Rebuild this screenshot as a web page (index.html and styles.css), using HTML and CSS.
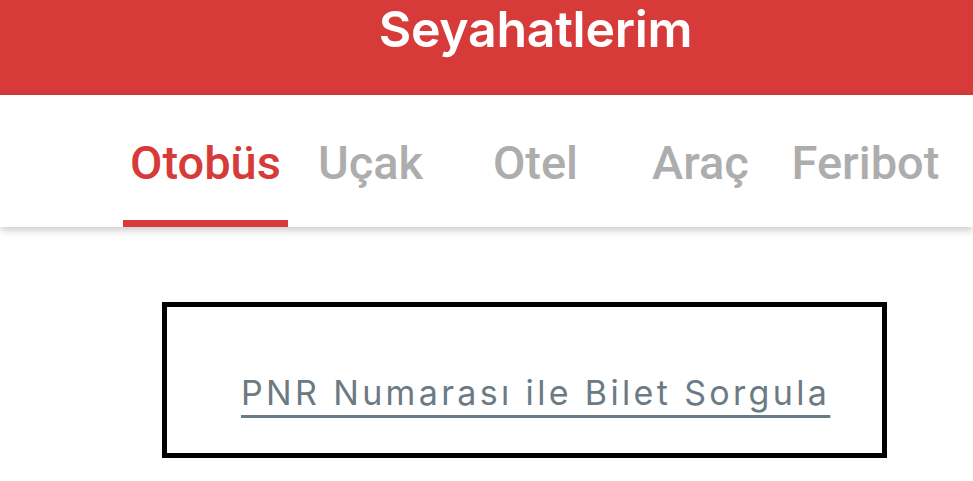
FILE: index.html
```html
<!DOCTYPE html>
<html lang="tr">
<head>
    <meta charset="UTF-8">
    <meta name="viewport" content="width=device-width, initial-scale=1.0">
    <title>Seyahatlerim</title>
    <link rel="stylesheet" href="styles.css">
</head>
<body>
    <header class="topbar">
        <h1 class="page-title">Seyahatlerim</h1>
    </header>

    <!-- Trip type tabs -->
    <nav class="tabs">
        <div class="tab-row">
            <a class="tab active" href="#">Otobüs</a>
            <a class="tab" href="#">Uçak</a>
            <a class="tab" href="#">Otel</a>
            <a class="tab" href="#">Araç</a>
            <a class="tab" href="#">Feribot</a>
        </div>
    </nav>

    <main class="content">
        <div class="pnr-box">
            <a class="pnr-link" href="#">PNR Numarası ile Bilet Sorgula</a>
        </div>
    </main>
</body>
</html>
```

FILE: styles.css
```css
body {
    margin: 0;
    padding: 0;
    font-family: Inter, "Noto Sans", sans-serif;
    background-color: #ffffff;
}
.topbar {
    background-color: #d63b3a;
    height: 95px;
    padding: 0 25px 0 123px;
    box-sizing: border-box;
}
.page-title {
    margin: 0;
    text-align: center;
    color: #ffffff;
    font-size: 50px;
    font-weight: 600;
    line-height: 58px;
    letter-spacing: -0.3px;
}
.tabs {
    background-color: #ffffff;
    box-shadow: 0 3px 8px rgba(0, 0, 0, 0.22);
    position: relative;
}
.tab-row {
    display: flex;
    padding-left: 123px;
}
.tab {
    width: 165px;
    padding: 44px 0 33px;
    border-bottom: 7px solid transparent;
    text-align: center;
    font-family: Roboto, "Liberation Sans", sans-serif;
    font-size: 47px;
    font-weight: 500;
    line-height: 48px;
    color: #adadad;
    text-decoration: none;
}
.tab.active {
    color: #d63b3a;
    border-bottom-color: #d63b3a;
}
.content {
    padding: 75px 0 0 162px;
}
.pnr-box {
    width: 725px;
    height: 156px;
    border: 5px solid #000000;
    box-sizing: border-box;
    padding: 66px 0 0 74px;
}
.pnr-link {
    color: #6c7a84;
    font-size: 34px;
    line-height: 40px;
    letter-spacing: 3.35px;
    text-decoration: underline;
    text-decoration-thickness: 3px;
    text-underline-offset: 10px;
}
```
